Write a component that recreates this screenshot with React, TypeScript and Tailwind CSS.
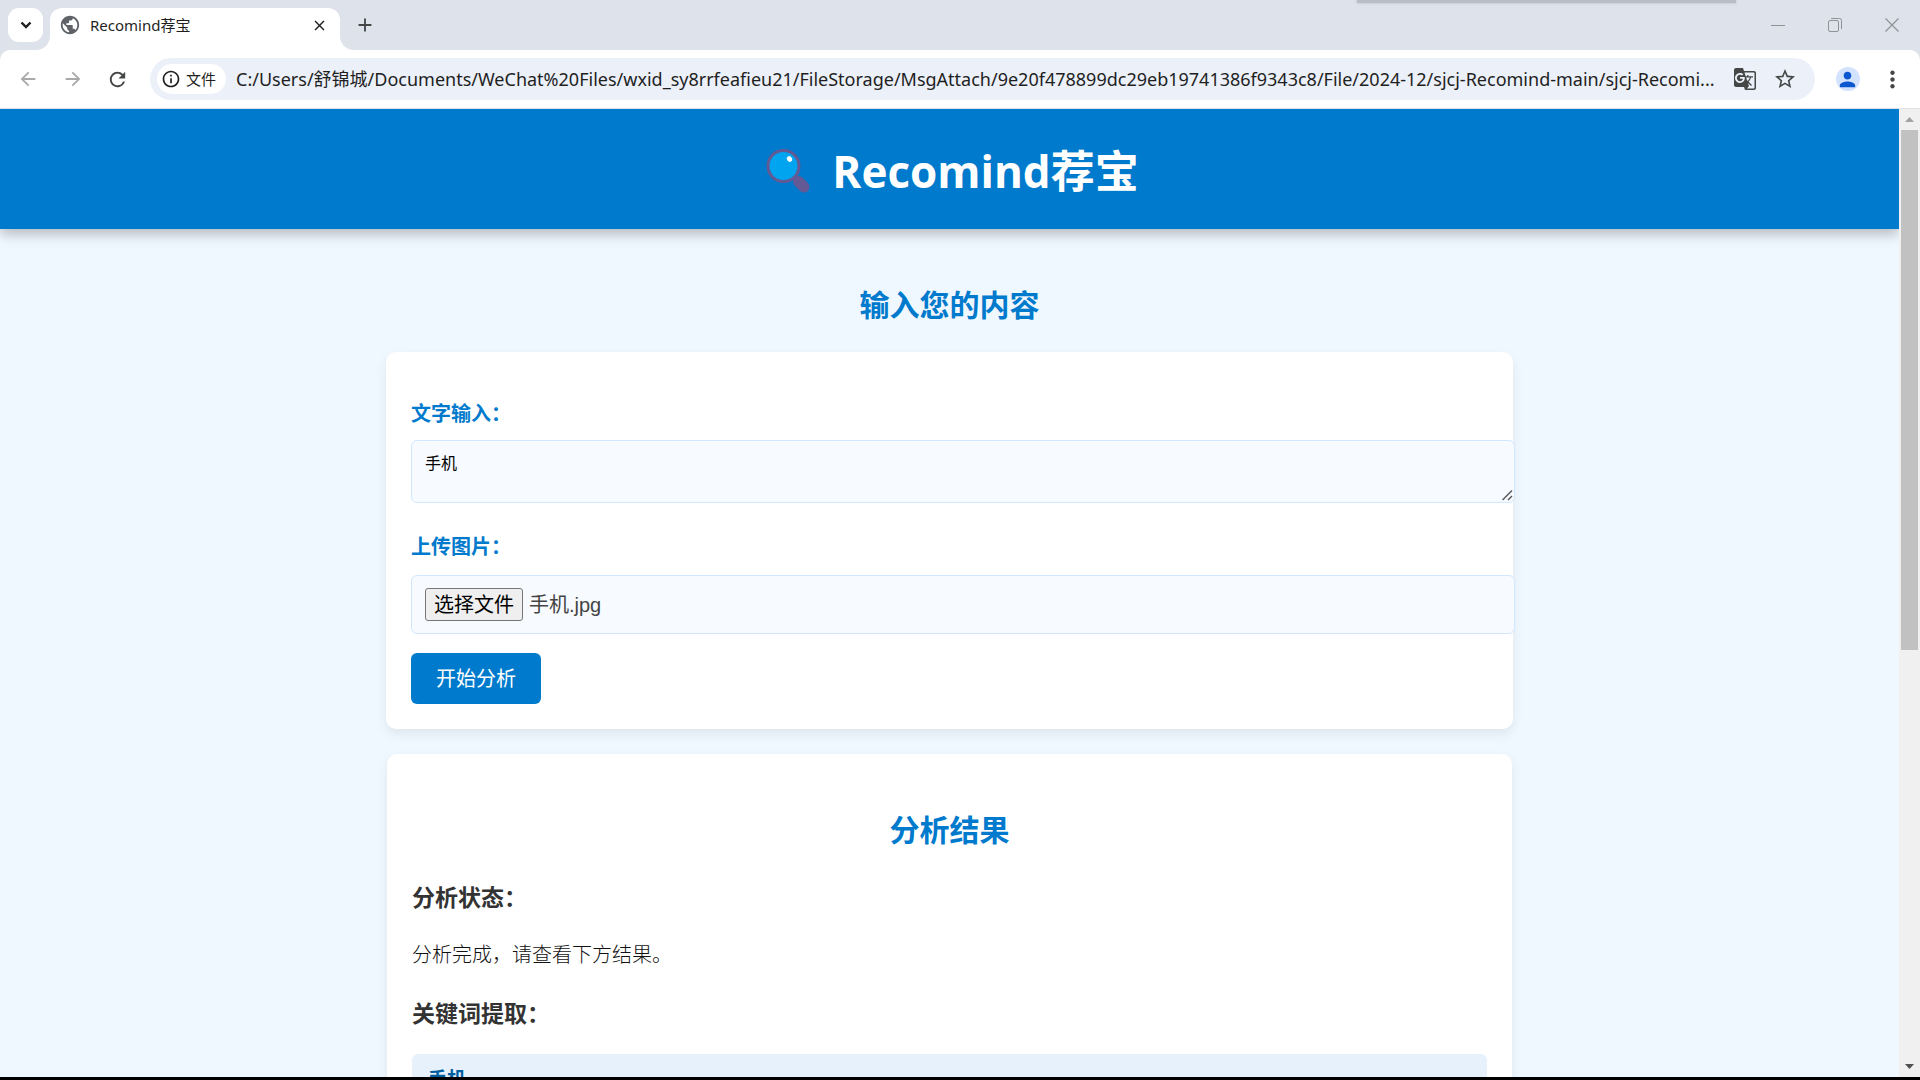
import { useState } from 'react';
import type { ReactNode } from 'react';
import {
  MdAdd,
  MdArrowBack,
  MdArrowForward,
  MdClose,
  MdGTranslate,
  MdInfoOutline,
  MdMoreVert,
  MdPerson,
  MdPublic,
  MdRefresh,
  MdStarBorder,
} from 'react-icons/md';

const FILE_URL =
  'C:/Users/舒锦城/Documents/WeChat%20Files/wxid_sy8rrfeafieu21/FileStorage/MsgAttach/9e20f478899dc29eb19741386f9343c8/File/2024-12/sjcj-Recomind-main/sjcj-Recomi...';

function ToolbarButton({ label, className = '', children }: { label: string; className?: string; children: ReactNode }) {
  return (
    <button
      type="button"
      aria-label={label}
      className={`flex h-10 w-[45px] shrink-0 items-center justify-center ${className}`}
    >
      {children}
    </button>
  );
}

function TabStrip() {
  return (
    <div className="relative flex h-[50px] shrink-0 items-start bg-[#dee2ea] pl-2">
      <div className="absolute left-[70.7%] top-0 h-[3px] w-[19.7%] bg-[#b9bdc6] shadow-[0_0_3px_#b9bdc6]" />
      <button
        type="button"
        aria-label="搜索标签页"
        className="mt-2 flex h-[34px] w-[35px] items-center justify-center rounded-[11px] bg-white"
      >
        <svg width="12" height="8" viewBox="0 0 12 8" fill="none" stroke="#1f1f1f" strokeWidth="2.4">
          <path d="M1.5 1.5 6 6l4.500-4.500" />
        </svg>
      </button>
      <div className="relative ml-[7px] mt-2 flex h-[42px] w-[290px] items-center rounded-t-[12px] bg-white pb-2 pl-[9px] pr-3">
        <svg className="absolute -left-[14px] bottom-0" width="14" height="14" fill="#fff">
          <path d="M14 0v14H0A14 14 0 0 0 14 0Z" />
        </svg>
        <svg className="absolute -right-[14px] bottom-0" width="14" height="14" fill="#fff">
          <path d="M0 0v14h14A14 14 0 0 1 0 0Z" />
        </svg>
        <MdPublic size={22} className="text-[#5f6368]" />
        <span className="ml-[9px] flex-1 text-[15px] text-[#1f1f1f]">Recomind荐宝</span>
        <button type="button" aria-label="关闭标签页" className="text-[#1f1f1f]">
          <MdClose size={17} />
        </button>
      </div>
      <button type="button" aria-label="新标签页" className="ml-[14px] mt-[14px] text-[#444746]">
        <MdAdd size={22} />
      </button>
      <div className="ml-auto flex h-[50px] text-[#8f9296]">
        <button type="button" aria-label="最小化" className="flex w-[57px] items-center justify-center">
          <svg width="14" height="14" stroke="currentColor">
            <path d="M0 7.500h14" />
          </svg>
        </button>
        <button type="button" aria-label="还原" className="flex w-[57px] items-center justify-center">
          <svg width="14" height="14" fill="none" stroke="currentColor">
            <rect x=".5" y="2.500" width="10" height="11" rx="1.500" />
            <path d="M3 .5h8.500a2 2 0 0 1 2 2V11" />
          </svg>
        </button>
        <button type="button" aria-label="关闭" className="flex w-[57px] items-center justify-center">
          <svg width="14" height="14" stroke="currentColor" strokeWidth="1.200">
            <path d="M.5.500l13 13M13.500.500l-13 13" />
          </svg>
        </button>
      </div>
    </div>
  );
}

function Toolbar() {
  return (
    <div className="shrink-0 bg-[#dee2ea]">
      <div className="flex h-[59px] items-center rounded-t-[10px] border-b border-[#dfe1e5] bg-white px-[5px]">
        <ToolbarButton label="后退" className="text-[#a9a9a9]">
          <MdArrowBack size={22} />
        </ToolbarButton>
        <ToolbarButton label="前进" className="text-[#a9a9a9]">
          <MdArrowForward size={22} />
        </ToolbarButton>
        <ToolbarButton label="重新加载" className="text-[#444746]">
          <MdRefresh size={23} />
        </ToolbarButton>
        <div className="mx-[10px] flex h-[42px] min-w-0 flex-1 items-center rounded-full bg-[#ebf0f9] pl-[7px] pr-[10px]">
          <button
            type="button"
            className="flex h-[30px] w-[69px] shrink-0 items-center rounded-full bg-white pl-1 text-[15px] text-[#1f1f1f]"
          >
            <MdInfoOutline size={20} className="mr-[5px]" />
            文件
          </button>
          <input
            type="text"
            aria-label="地址栏"
            defaultValue={FILE_URL}
            className="ml-[10px] min-w-0 flex-1 bg-transparent text-[18px] text-[#1f1f1f] outline-none"
          />
          <button type="button" aria-label="翻译此页" className="flex w-10 shrink-0 justify-center text-[#444746]">
            <MdGTranslate size={24} />
          </button>
          <button type="button" aria-label="添加书签" className="flex w-10 shrink-0 justify-center text-[#444746]">
            <MdStarBorder size={24} />
          </button>
        </div>
        <ToolbarButton label="个人资料">
          <span className="flex size-6 items-center justify-center rounded-full bg-[#d3e3fd] text-[#0b57d0]">
            <MdPerson size={23} />
          </span>
        </ToolbarButton>
        <ToolbarButton label="更多" className="text-[#444746]">
          <MdMoreVert size={27} />
        </ToolbarButton>
      </div>
    </div>
  );
}

function Magnifier() {
  return (
    <svg width="44" height="44" viewBox="0 0 44 44">
      <path d="M29 29l3 3" stroke="#635994" strokeWidth="5" />
      <path d="M32.500 32.500l5.500 5.500" stroke="#635994" strokeWidth="11" strokeLinecap="round" />
      <circle cx="17.500" cy="17" r="15.500" fill="#00a4ef" stroke="#635994" strokeWidth="3" />
      <ellipse cx="23.500" cy="10" rx="2.500" ry="3" fill="#fff" transform="rotate(-30 23.500 10)" />
    </svg>
  );
}

function InputCard() {
  const [text, setText] = useState('手机');
  const [fileName, setFileName] = useState('手机.jpg');

  return (
    <form
      onSubmit={(e) => e.preventDefault()}
      className="rounded-[10px] bg-white px-[25px] pb-[25px] pt-[47px] shadow-[0_5px_12px_rgba(0,0,0,0.07)]"
    >
      <label htmlFor="text-input" className="block text-xl leading-[30px] font-bold text-[#007acc]">
        文字输入：
      </label>
      <div className="relative mt-[11px] w-[calc(100%+27px)]">
        <textarea
          id="text-input"
          value={text}
          onChange={(e) => setText(e.target.value)}
          className="block h-[63px] w-full resize-none rounded-md border border-[#d0e8ff] bg-[#f7fbff] px-[13px] py-[10px] text-base text-black"
        />
        <svg
          className="pointer-events-none absolute bottom-[2px] right-[2px]"
          width="11"
          height="11"
          fill="none"
          stroke="#5a5a5a"
          strokeWidth="1.500"
        >
          <path d="M.5 10 10 .500M6 10l4-4" />
        </svg>
      </div>
      <label htmlFor="file-input" className="mt-[29px] block text-xl leading-[30px] font-bold text-[#007acc]">
        上传图片：
      </label>
      <label className="mt-[13px] flex h-[59px] w-[calc(100%+27px)] items-center rounded-md border border-[#d0e8ff] bg-[#f7fbff] px-[13px] text-xl text-[#444]">
        <input
          id="file-input"
          type="file"
          accept="image/*"
          className="sr-only"
          onChange={(e) => setFileName(e.target.files?.[0]?.name ?? '')}
        />
        <span className="mr-[6px] flex h-[33px] items-center rounded-[3px] border border-[#767676] bg-[#efefef] px-2 text-black">
          选择文件
        </span>
        <span className="font-['Liberation_Sans','Noto_Sans_CJK_SC',sans-serif]">{fileName}</span>
      </label>
      <button type="submit" className="mt-[19px] block h-[51px] rounded-md bg-[#007acc] px-[25px] text-xl text-white">
        开始分析
      </button>
    </form>
  );
}

function ResultCard() {
  return (
    <section className="mx-px mt-[25px] rounded-[10px] bg-white px-[25px] pb-[25px] pt-[53px] text-[#333] shadow-[0_5px_12px_rgba(0,0,0,0.07)]">
      <h2 className="text-center text-3xl leading-[45px] font-bold text-[#007acc]">分析结果</h2>
      <h3 className="mt-[27px] text-[23px] leading-9 font-bold">分析状态：</h3>
      <p className="mt-[25px] text-xl leading-[30px] font-light text-[#111]">分析完成，请查看下方结果。</p>
      <h3 className="mt-[25px] text-[23px] leading-9 font-bold">关键词提取：</h3>
      <ul className="mt-[23px]">
        <li className="rounded-md bg-[#e6f1fc] px-4 py-[10px] text-[19px] leading-[30px] font-bold text-[#005f9e]">手机</li>
      </ul>
    </section>
  );
}

function ScrollBar() {
  return (
    <div className="flex w-[21px] shrink-0 flex-col items-center bg-[#f0f0f0]">
      <div className="flex h-[21px] shrink-0 items-center">
        <svg width="9" height="5" fill="#a3a3a3">
          <path d="M4.500 0 9 5H0Z" />
        </svg>
      </div>
      <div className="min-h-0 w-full flex-1 px-[2px]">
        <div className="h-[56.2%] bg-[#c1c1c1]" />
      </div>
      <div className="flex h-[21px] shrink-0 items-center">
        <svg width="9" height="5" fill="#505050">
          <path d="M0 0h9L4.500 5Z" />
        </svg>
      </div>
    </div>
  );
}

function App() {
  return (
    <div
      lang="zh-CN"
      className="flex h-screen flex-col overflow-hidden bg-[#eff7ff] font-['Noto_Sans','Noto_Sans_CJK_SC',sans-serif]"
    >
      <TabStrip />
      <Toolbar />
      <div className="flex min-h-0 flex-1">
        <div className="min-w-0 flex-1 overflow-hidden">
          <header className="flex h-[120px] items-center justify-center gap-[22px] bg-[#007acc] pl-[6px] pt-1 shadow-[0_5px_12px_rgba(0,0,0,0.25)]">
            <Magnifier />
            <h1 className="font-['Open_Sans','Noto_Sans_CJK_SC',sans-serif] text-[44px] leading-[60px] font-bold text-white">
              Recomind荐宝
            </h1>
          </header>
          <main className="mx-auto max-w-[1127px] pt-[53px]">
            <h2 className="mb-[25px] text-center text-3xl leading-[45px] font-bold text-[#007acc]">输入您的内容</h2>
            <InputCard />
            <ResultCard />
          </main>
        </div>
        <ScrollBar />
      </div>
      <div className="h-[3px] shrink-0 bg-black" />
    </div>
  );
}

export default App;
